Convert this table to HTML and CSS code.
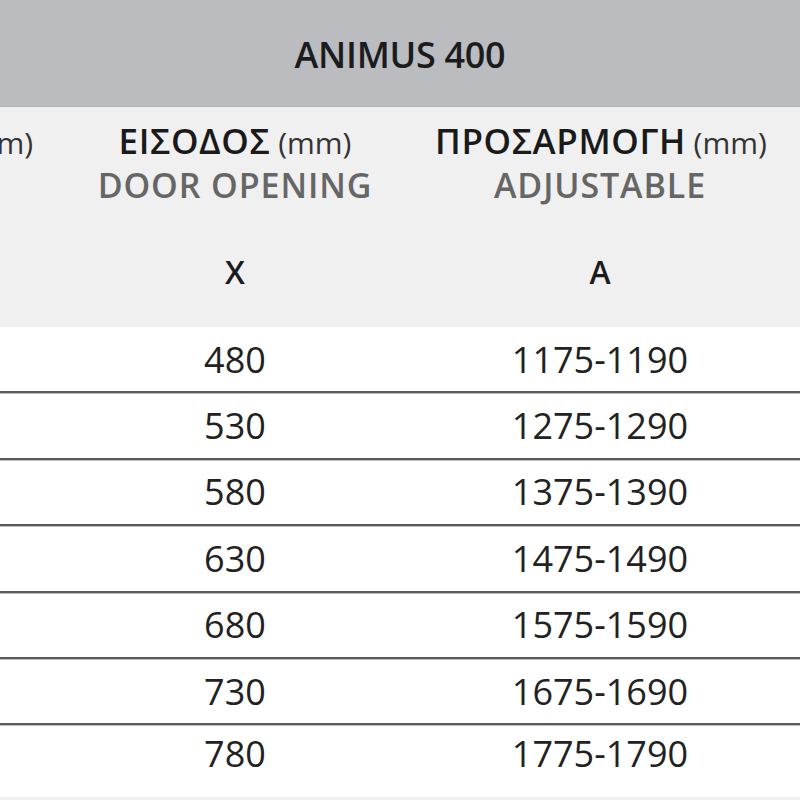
FILE: index.html
```html
<!DOCTYPE html>
<html lang="el">
<head>
<meta charset="utf-8">
<title>ANIMUS 400</title>
<link rel="stylesheet" href="styles.css">
</head>
<body>
<div class="sheet">
  <div class="title-band"><span class="title">ANIMUS 400</span></div>
  <div class="table">
    <div class="head-row">
      <div class="head-cell">
        <div class="gr"><b>ΠΛΑΤΟΣ</b> (mm)</div>
        <div class="en">WIDTH</div>
        <div class="sym">B</div>
      </div>
      <div class="head-cell">
        <div class="gr"><b>ΕΙΣΟΔΟΣ</b> (mm)</div>
        <div class="en">DOOR OPENING</div>
        <div class="sym">X</div>
      </div>
      <div class="head-cell">
        <div class="gr"><b>ΠΡΟΣΑΡΜΟΓΗ</b> (mm)</div>
        <div class="en">ADJUSTABLE</div>
        <div class="sym">A</div>
      </div>
      <div class="head-cell"></div>
    </div>
    <div class="row"><div class="cell">1200</div><div class="cell">480</div><div class="cell">1175-1190</div><div class="cell"></div></div>
    <div class="row"><div class="cell">1300</div><div class="cell">530</div><div class="cell">1275-1290</div><div class="cell"></div></div>
    <div class="row"><div class="cell">1400</div><div class="cell">580</div><div class="cell">1375-1390</div><div class="cell"></div></div>
    <div class="row"><div class="cell">1500</div><div class="cell">630</div><div class="cell">1475-1490</div><div class="cell"></div></div>
    <div class="row"><div class="cell">1600</div><div class="cell">680</div><div class="cell">1575-1590</div><div class="cell"></div></div>
    <div class="row"><div class="cell">1700</div><div class="cell">730</div><div class="cell">1675-1690</div><div class="cell"></div></div>
    <div class="row last"><div class="cell">1800</div><div class="cell">780</div><div class="cell">1775-1790</div><div class="cell"></div></div>
  </div>
  <div class="foot-band"></div>
</div>
</body>
</html>
```
FILE: styles.css
```css
html, body {
  margin: 0;
  padding: 0;
  background: #ffffff;
}
body {
  width: 800px;
  height: 800px;
  overflow: hidden;
  font-family: "Open Sans", "Noto Sans", "DejaVu Sans", sans-serif;
  color: #1c1c1c;
}
.sheet {
  width: 800px;
}
.title-band {
  height: 106px;
  background: #babcbf;
  border-bottom: 1px solid #b0b2b5;
  display: flex;
  align-items: center;
  justify-content: center;
}
.title {
  font-size: 36px;
  font-weight: 600;
  color: #1c1c1e;
  letter-spacing: -0.3px;
  padding-top: 2px;
}
.table {
  width: 1040px;
  margin-left: -192px;
}
.head-row, .row {
  display: grid;
  grid-template-columns: 227px 400px 330px 1fr;
}
.head-row {
  height: 220px;
  background: #f0f0f0;
}
.head-cell {
  text-align: center;
  padding-top: 14px;
  white-space: nowrap;
}
.gr {
  font-size: 30px;
  line-height: 40px;
  color: #333;
  font-weight: 400;
}
.gr b {
  font-size: 35px;
  font-weight: 600;
  color: #1a1a1a;
  letter-spacing: 0.6px;
}
.en {
  font-size: 34px;
  line-height: 45px;
  font-weight: 600;
  color: #666666;
  letter-spacing: 0.9px;
}
.sym {
  margin-top: 44px;
  font-size: 32px;
  line-height: 40px;
  font-weight: 600;
  color: #1c1c1c;
}
.row {
  height: 64.4px;
  border-bottom: 2px solid #5a5a5a;
  box-shadow: 0 1px 0 #bdbdbd;
}
.row.last {
  height: 72px;
  border-bottom: none;
  box-shadow: none;
}
.cell {
  display: flex;
  align-items: center;
  justify-content: center;
  font-size: 36px;
  font-weight: 400;
  color: #222;
}
.row.last .cell {
  align-items: flex-start;
  padding-top: 4px;
}
.foot-band {
  height: 10px;
  background: #f0f0f0;
}
```
